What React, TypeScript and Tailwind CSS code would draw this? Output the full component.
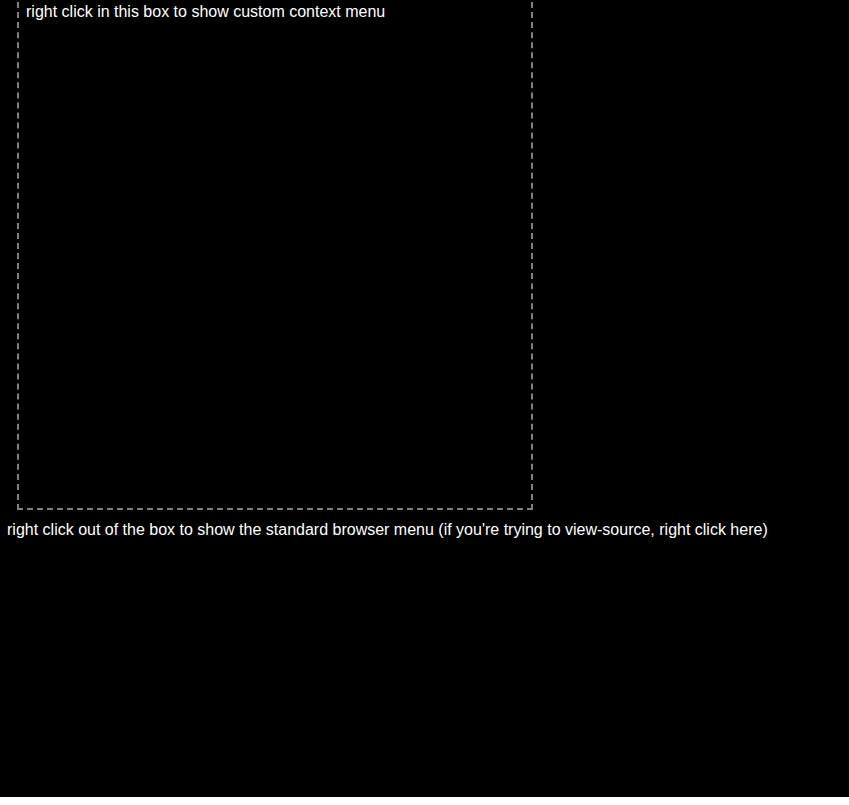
export default function App() {
  return (
    <div className="min-h-[805px] bg-black text-white" style={{ fontFamily: '"Liberation Sans", Arial, sans-serif' }}>
      <div className="ml-[17px] mt-[-8px] h-[518px] w-[516px] border-2 border-dashed border-[#808080] pl-[7px] pt-[9px] text-base leading-[18px]">
        right click in this box to show custom context menu
      </div>
      <div className="mt-[11px] pl-[7px] text-base leading-[18px]">
        right click out of the box to show the standard browser menu (if you're trying to view-source, right click here)
      </div>
    </div>
  );
}
